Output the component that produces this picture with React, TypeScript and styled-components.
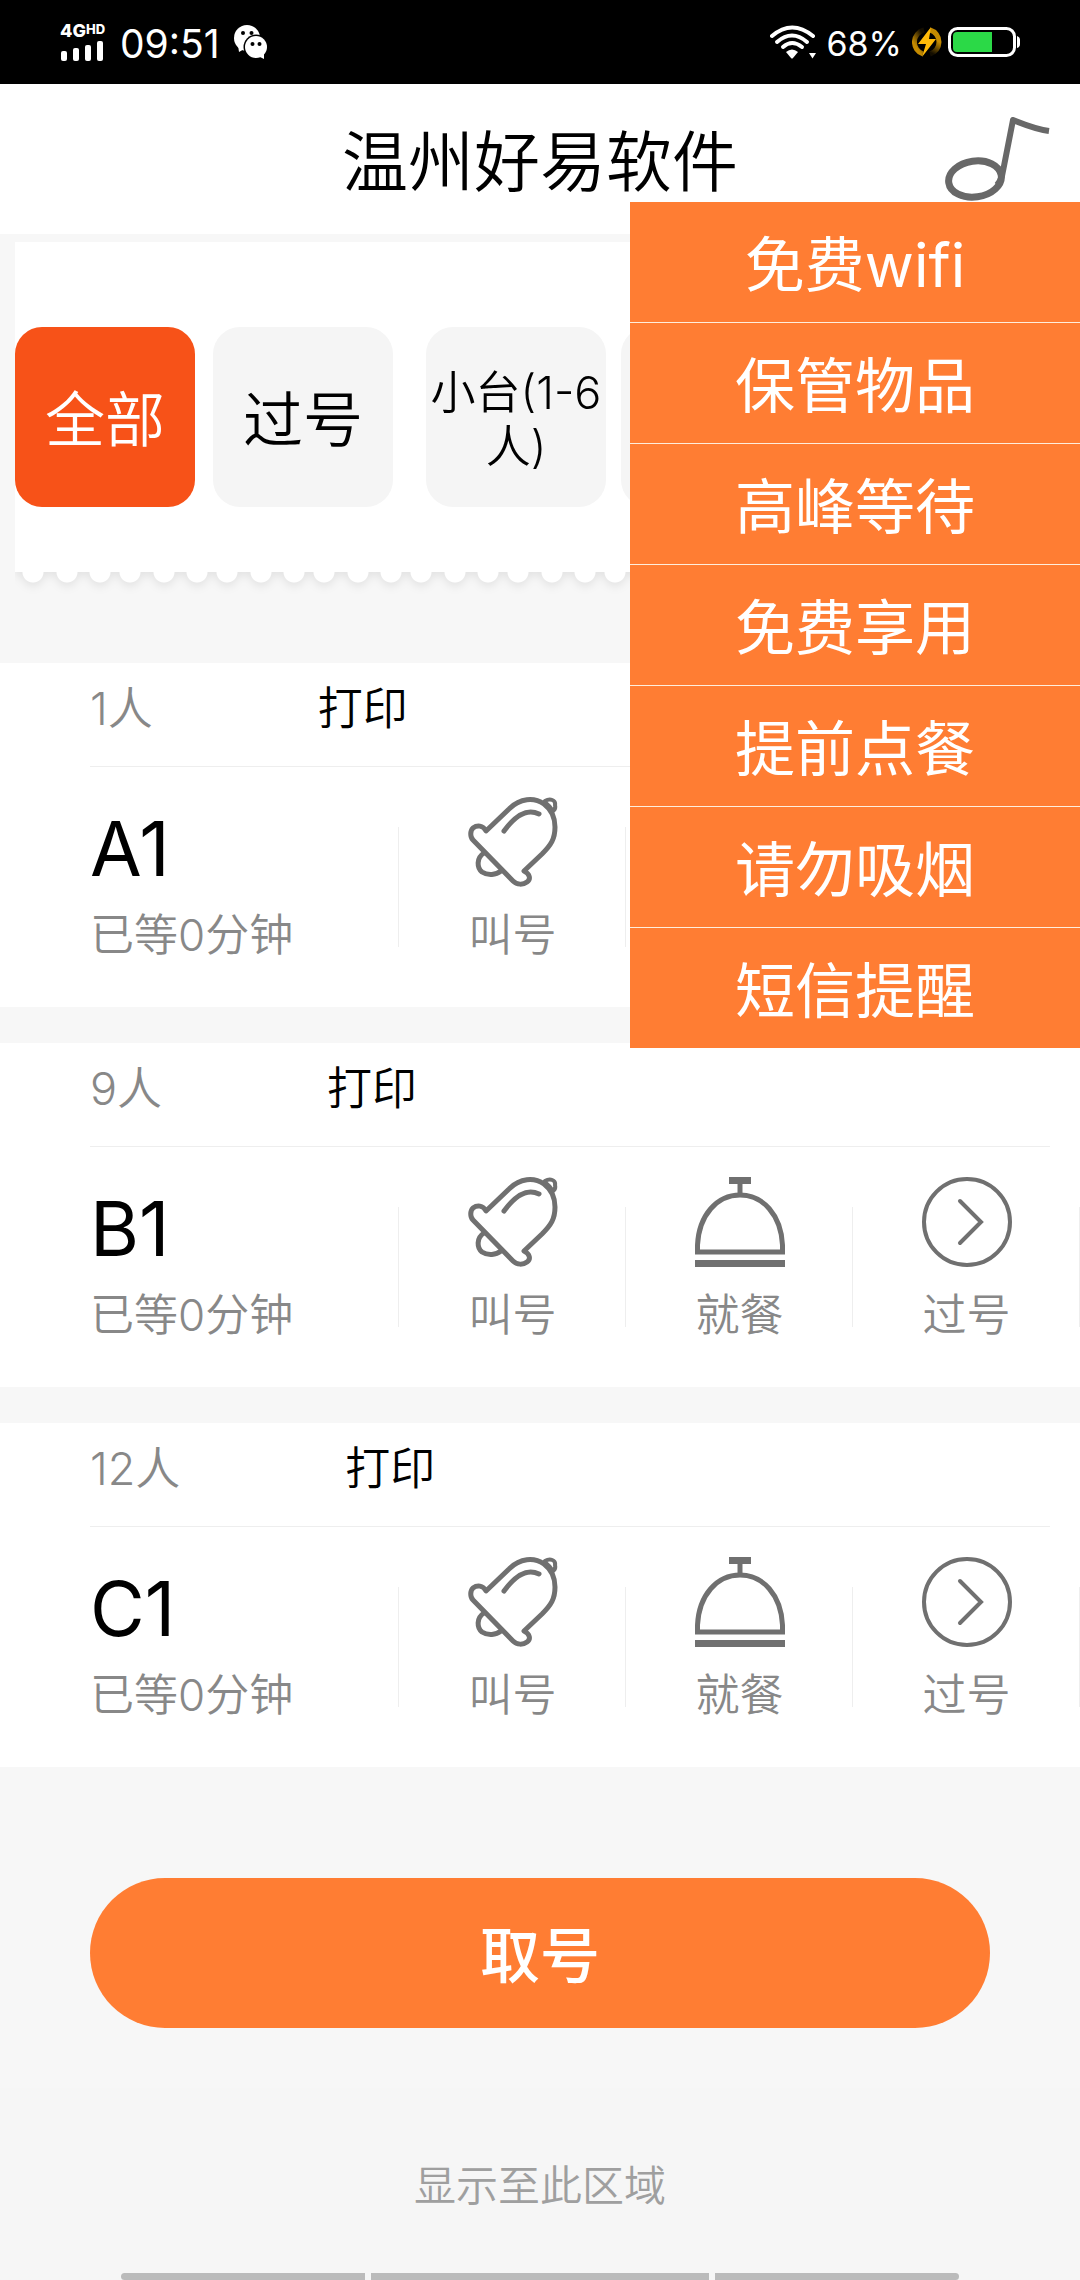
import React from "react";
import styled, { createGlobalStyle } from "styled-components";

const GlobalStyle = createGlobalStyle`
  * { box-sizing: border-box; }
  body {
    margin: 0;
    background: #f7f7f7;
    color: #000;
    font-family: Inter, "Noto Sans CJK SC", sans-serif;
    font-weight: 350;
  }
  button {
    margin: 0;
    padding: 0;
    border: 0;
    background: none;
    color: inherit;
    font: inherit;
    cursor: pointer;
  }
  ul { margin: 0; padding: 0; list-style: none; }
  svg { display: block; flex: none; }
`;

const Page = styled.div`
  display: flex;
  flex-direction: column;
  min-height: 100vh;
  overflow-x: hidden;
`;

/* ---------- status bar ---------- */

const StatusBar = styled.div`
  display: flex;
  align-items: center;
  justify-content: space-between;
  height: 84px;
  padding: 0 60px;
  background: #000;
  color: #fff;
  font-weight: 400;
`;

const StatusGroup = styled.div<{ $gap: number }>`
  display: flex;
  align-items: center;
  gap: ${(p) => p.$gap}px;
`;

const Network = styled.div`
  display: flex;
  flex-direction: column;
  gap: 2px;
`;

const NetworkType = styled.span`
  display: flex;
  align-items: flex-start;
  font-size: 18px;
  line-height: 16px;
  font-weight: 800;

  sup {
    font-size: 13px;
    line-height: 12px;
  }
`;

const Clock = styled.time`
  padding-top: 4px;
  font-size: 39px;
  line-height: 48px;
`;

const BatteryLevel = styled.span`
  padding-top: 4px;
  font-size: 34px;
  line-height: 40px;
`;

const SignalBars = () => (
  <svg width="46" height="20" viewBox="0 0 46 20" fill="#fff" aria-hidden="true">
    <rect x="1" y="10" width="6" height="10" rx="2" />
    <rect x="13" y="7" width="6" height="13" rx="2" />
    <rect x="25" y="4" width="6" height="16" rx="2" />
    <rect x="37" y="0" width="6" height="20" rx="2" />
  </svg>
);

const WechatIcon = () => (
  <svg width="34" height="34" viewBox="0 0 34 34" aria-label="微信">
    <path d="M4 20 L5 27 L12 23 Z" fill="#fff" />
    <ellipse cx="13" cy="13" rx="13" ry="13" fill="#fff" />
    <circle cx="9" cy="8" r="2" fill="#000" />
    <circle cx="17.500" cy="8" r="2" fill="#000" />
    <circle cx="22" cy="22" r="12.500" fill="#000" />
    <circle cx="22" cy="22" r="11" fill="#fff" />
    <path d="M24 31 L30 34 L30 27 Z" fill="#fff" />
    <circle cx="18.500" cy="19" r="2" fill="#000" />
    <circle cx="25.500" cy="19" r="2" fill="#000" />
  </svg>
);

const WifiIcon = () => (
  <svg width="46" height="34" viewBox="0 0 46 34" aria-label="Wi-Fi">
    <g fill="none" stroke="#fff" strokeWidth="4" strokeLinecap="round">
      <path d="M2 11 Q22 -6 43 11" />
      <path d="M7 17 Q22 4 37 17" />
      <path d="M13 22 Q22 14 32 22" />
    </g>
    <path d="M16 27 Q22 22 28 27 L23 33 Q22 34 21 33 Z" fill="#fff" />
    <path d="M39 28 H46 L42.500 33.500 Z" fill="#fff" />
  </svg>
);

const ChargeIcon = () => (
  <svg width="30" height="30" viewBox="0 0 30 30" aria-label="充电中">
    <defs>
      <linearGradient id="ringLeft" x1="0" y1="1" x2="0.600" y2="0">
        <stop offset="0.300" stopColor="#c48a00" />
        <stop offset="1" stopColor="#c48a00" stopOpacity="0.100" />
      </linearGradient>
      <linearGradient id="ringRight" x1="0.600" y1="0" x2="0.400" y2="1">
        <stop offset="0.400" stopColor="#c48a00" />
        <stop offset="1" stopColor="#c48a00" stopOpacity="0.100" />
      </linearGradient>
    </defs>
    <path d="M11 27 A12.500 12.500 0 0 1 12 3" fill="none" stroke="url(#ringLeft)" strokeWidth="5" />
    <path d="M18 3 A12.500 12.500 0 0 1 18 27" fill="none" stroke="url(#ringRight)" strokeWidth="5" />
    <path d="M19 0 L6 17 H14 L10 30 L24 12 H17 Z" fill="#ffba08" />
  </svg>
);

const BatteryIcon = () => (
  <svg width="72" height="30" viewBox="0 0 72 30" aria-hidden="true">
    <rect x="1.500" y="1.500" width="65" height="27" rx="8" fill="none" stroke="#fff" strokeWidth="3" />
    <path d="M9 5 H44 V25 H9 Q5 25 5 21 V9 Q5 5 9 5 Z" fill="#2bd947" />
    <path d="M69 9 Q72 10 72 13 V17 Q72 20 69 21 Z" fill="#fff" />
  </svg>
);

/* ---------- header and menu ---------- */

const Header = styled.header`
  position: relative;
  z-index: 2;
  display: flex;
  align-items: center;
  justify-content: center;
  height: 150px;
  padding-top: 6px;
  background: #fff;
`;

const Title = styled.h1`
  margin: 0;
  font-size: 66px;
  line-height: 96px;
  font-weight: 350;
`;

const MusicButton = styled.button`
  position: absolute;
  top: 33px;
  right: 30px;
`;

const MusicIcon = () => (
  <svg width="105" height="84" viewBox="0 0 105 84" fill="none" stroke="#686868" strokeWidth="7">
    <ellipse cx="30" cy="62" rx="26.500" ry="18" transform="rotate(-8 30 62)" />
    <path d="M104 14 Q90 12 68 3 L58 54 Q57 62 52 68" strokeWidth="6" strokeLinejoin="round" />
  </svg>
);

const Menu = styled.ul`
  position: absolute;
  top: 118px;
  right: 0;
  width: 450px;
  background: #ff7d33;
  color: #fff;
  font-weight: 400;
`;

const MenuItem = styled.li`
  & + & {
    border-top: 1px solid #ffeedd;
  }
`;

const MenuButton = styled.button`
  display: block;
  width: 100%;
  height: 120px;
  padding-top: 6px;
  font-size: 60px;
  line-height: 72px;
`;

/* ---------- category tabs ---------- */

const TicketCard = styled.nav`
  margin: 8px 15px 0;
  filter: drop-shadow(0 4px 4px rgba(0, 0, 0, 0.08));
  clip-path: inset(0 0 -24px 0);
`;

const TicketBody = styled.div`
  display: flex;
  gap: 33px;
  padding: 85px 0 65px;
  overflow: hidden;
  background: #fff;
`;

const TicketEdge = styled.div`
  height: 11px;
  background:
    radial-gradient(circle at 18px 0, #fff 10px, transparent 11px) 0 0 / 97px 11px repeat-x,
    radial-gradient(circle at 52px 0, #fff 10px, transparent 11px) 0 0 / 97px 11px repeat-x,
    radial-gradient(circle at 85px 0, #fff 10px, transparent 11px) 0 0 / 97px 11px repeat-x;
`;

const TabGroup = styled.div<{ $gap: number }>`
  display: flex;
  flex: none;
  gap: ${(p) => p.$gap}px;
`;

const Tab = styled.button<{ $active?: boolean; $small?: boolean }>`
  flex: none;
  width: 180px;
  height: 180px;
  padding-top: 6px;
  border-radius: 27px;
  background: ${(p) => (p.$active ? "#f75218" : "#f5f5f5")};
  color: ${(p) => (p.$active ? "#fff" : "#000")};
  font-size: ${(p) => (p.$small ? 45 : 60)}px;
  line-height: ${(p) => (p.$small ? 54 : 72)}px;
`;

/* ---------- queue ---------- */

const Queue = styled.ul`
  display: flex;
  flex-direction: column;
  gap: 36px;
  margin-top: 80px;
`;

const Card = styled.li`
  background: #fff;
`;

const CardHead = styled.div`
  display: flex;
  gap: 165px;
  height: 104px;
  margin: 0 30px 0 90px;
  padding-top: 16px;
  border-bottom: 1px solid #eee;
  font-size: 45px;
  line-height: 60px;
`;

const PartySize = styled.span`
  color: #888;
`;

const PrintButton = styled.button`
  align-self: flex-start;
`;

const CardBody = styled.div`
  display: grid;
  grid-template-columns: 399fr 227fr 227fr 227fr;
  height: 240px;
`;

const Cell = styled.div`
  display: flex;
  flex-direction: column;
  background: linear-gradient(#eee, #eee) right center / 1px 120px no-repeat;
`;

const Ticket = styled(Cell)`
  gap: 14px;
  padding: 40px 0 0 90px;
`;

const TicketNumber = styled.strong`
  font-size: 75px;
  line-height: 84px;
  font-weight: 400;
`;

const Caption = styled.span`
  color: #888;
  font-size: 44px;
  line-height: 60px;
`;

const Action = styled(Cell).attrs({ as: "button" })`
  align-items: center;
  gap: 18px;
  padding-top: 30px;
`;

const BellIcon = () => (
  <svg width="90" height="90" viewBox="0 0 90 90" fill="none" stroke="#707070" strokeWidth="5" strokeLinecap="round" strokeLinejoin="round">
    <path d="M18 34 L41 12 C52 1 66 0 76 7 C84 13 87 20 87 30 C87 42 83 48 74 57 L56 74 C62 77 63 82 59 85 C55 88 49 88 45 84 L5 43 C2 40 2 34 5 31 C9 28 15 28 18 34 Z" />
    <path d="M36 34 C44 23 57 10 71 17" />
    <path d="M77 4 C82 1 88 3 87 8 Q88 12 85 14 Q82 9 78 6" strokeWidth="4" />
    <path d="M16 56 C8 61 9 71 14 75 C20 79 28 78 33 74" />
  </svg>
);

const DishIcon = () => (
  <svg width="90" height="90" viewBox="0 0 90 90" fill="none" stroke="#707070" strokeWidth="5">
    <path d="M34 3.500 H56" strokeWidth="7" />
    <path d="M45 6 V17" />
    <path d="M2.500 75 V68 C4 38 22 18 45 18 C68 18 86 38 87.500 68 V75 Z" />
    <path d="M0 86.500 H90" strokeWidth="7" />
  </svg>
);

const SkipIcon = () => (
  <svg width="90" height="90" viewBox="0 0 90 90" fill="none" stroke="#707070" strokeWidth="4" strokeLinecap="round">
    <circle cx="45" cy="45" r="43" />
    <path d="M38 24 L59 45 L38 66" />
  </svg>
);

const actions = [
  { label: "叫号", Icon: BellIcon },
  { label: "就餐", Icon: DishIcon },
  { label: "过号", Icon: SkipIcon },
];

/* ---------- bottom ---------- */

const TakeButton = styled.button`
  height: 150px;
  margin: 111px 90px 60px;
  padding-top: 6px;
  border-radius: 75px;
  background: #ff7d33;
  color: #fff;
  font-size: 60px;
  line-height: 72px;
  font-weight: 500;
`;

const Footer = styled.footer`
  display: flex;
  flex: 1;
  flex-direction: column;
  justify-content: space-between;
  background: #f6f6f6;
`;

const FooterNote = styled.p`
  margin: 0;
  padding-top: 68px;
  color: #9f9f9f;
  font-size: 42px;
  line-height: 60px;
  text-align: center;
`;

const GestureBar = styled.div`
  display: grid;
  grid-template-columns: 244fr 338fr 244fr;
  gap: 6px;
  margin: 0 121px;
  border-radius: 4px;
  overflow: hidden;
`;

const GestureSegment = styled.span`
  height: 7px;
  background: #bbb;
`;

const menuItems = ["免费wifi", "保管物品", "高峰等待", "免费享用", "提前点餐", "请勿吸烟", "短信提醒"];

const queue = [
  { number: "A1", size: 1, waited: 0 },
  { number: "B1", size: 9, waited: 0 },
  { number: "C1", size: 12, waited: 0 },
];

export default function App() {
  return (
    <Page>
      <GlobalStyle />
      <StatusBar>
        <StatusGroup $gap={14}>
          <Network>
            <NetworkType>
              4G<sup>HD</sup>
            </NetworkType>
            <SignalBars />
          </Network>
          <Clock>09:51</Clock>
          <WechatIcon />
        </StatusGroup>
        <StatusGroup $gap={10}>
          <WifiIcon />
          <BatteryLevel>68%</BatteryLevel>
          <StatusGroup $gap={6}>
            <ChargeIcon />
            <BatteryIcon />
          </StatusGroup>
        </StatusGroup>
      </StatusBar>

      <Header>
        <Title>温州好易软件</Title>
        <MusicButton aria-label="音乐">
          <MusicIcon />
        </MusicButton>
        <Menu>
          {menuItems.map((item) => (
            <MenuItem key={item}>
              <MenuButton>{item}</MenuButton>
            </MenuItem>
          ))}
        </Menu>
      </Header>

      <TicketCard>
        <TicketBody>
          <TabGroup $gap={18}>
            <Tab $active>全部</Tab>
            <Tab>过号</Tab>
          </TabGroup>
          <TabGroup $gap={15}>
            <Tab $small>小台(1-6人)</Tab>
            <Tab $small />
          </TabGroup>
        </TicketBody>
        <TicketEdge />
      </TicketCard>

      <Queue>
        {queue.map((entry) => (
          <Card key={entry.number}>
            <CardHead>
              <PartySize>{entry.size}人</PartySize>
              <PrintButton>打印</PrintButton>
            </CardHead>
            <CardBody>
              <Ticket>
                <TicketNumber>{entry.number}</TicketNumber>
                <Caption>已等{entry.waited}分钟</Caption>
              </Ticket>
              {actions.map(({ label, Icon }) => (
                <Action key={label}>
                  <Icon />
                  <Caption>{label}</Caption>
                </Action>
              ))}
            </CardBody>
          </Card>
        ))}
      </Queue>

      <TakeButton>取号</TakeButton>

      <Footer>
        <FooterNote>显示至此区域</FooterNote>
        <GestureBar aria-hidden="true">
          <GestureSegment />
          <GestureSegment />
          <GestureSegment />
        </GestureBar>
      </Footer>
    </Page>
  );
}
